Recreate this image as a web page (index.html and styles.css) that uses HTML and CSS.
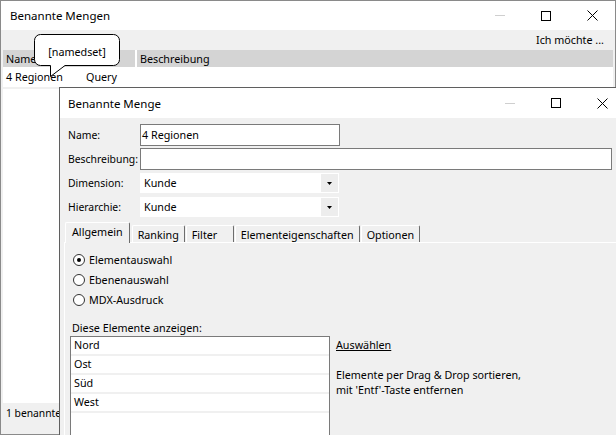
FILE: index.html
```html
<!DOCTYPE html>
<html lang="de">
<head>
<meta charset="utf-8">
<title>Benannte Mengen</title>
<link rel="stylesheet" href="styles.css">
</head>
<body>
<div class="window">
  <div class="titlebar">
    <span class="title">Benannte Mengen</span>
    <div class="controls">
      <span class="ctl"><svg width="10" height="1" viewBox="0 0 10 1"><rect width="10" height="1" fill="#cfcfcf"/></svg></span>
      <span class="ctl"><svg width="10" height="10" viewBox="0 0 10 10"><rect x="0.5" y="0.5" width="9" height="9" fill="none" stroke="#000"/></svg></span>
      <span class="ctl"><svg width="11" height="11" viewBox="0 0 11 11"><path d="M0.5 0.5L10.5 10.5M10.5 0.5L0.5 10.5" stroke="#000" stroke-width="1"/></svg></span>
    </div>
  </div>
  <div class="toolbar"><span>Ich möchte ...</span></div>
  <div class="grid">
    <div class="grid-head">
      <div class="hcell hcell-name">Name</div>
      <div class="hcell hcell-desc">Beschreibung</div>
    </div>
    <div class="grid-row">
      <span class="cell-name">4 Regionen</span>
      <span class="cell-desc">Query</span>
    </div>
  </div>
  <div class="statusbar"><span class="status-text">1 benannte</span></div>
</div>

<div class="tooltip">
  <svg class="tooltip-shape" width="87" height="44" viewBox="0 0 87 44">
    <path d="M6.5 0.5H79.5A6 6 0 0 1 85.5 6.5V25.5A6 6 0 0 1 79.5 31.5H31L16.5 42.5V31.5H6.5A6 6 0 0 1 0.5 25.5V6.5A6 6 0 0 1 6.5 0.5Z" fill="#fff" stroke="#000" stroke-width="1"/>
  </svg>
  <span class="tooltip-text">[namedset]</span>
</div>

<div class="dialog">
  <div class="dlg-titlebar">
    <span class="dlg-title">Benannte Menge</span>
    <div class="controls">
      <span class="ctl"><svg width="10" height="1" viewBox="0 0 10 1"><rect width="10" height="1" fill="#cfcfcf"/></svg></span>
      <span class="ctl"><svg width="10" height="10" viewBox="0 0 10 10"><rect x="0.5" y="0.5" width="9" height="9" fill="none" stroke="#000"/></svg></span>
      <span class="ctl"><svg width="11" height="11" viewBox="0 0 11 11"><path d="M0.5 0.5L10.5 10.5M10.5 0.5L0.5 10.5" stroke="#000" stroke-width="1"/></svg></span>
    </div>
  </div>
  <div class="dlg-body">
    <div class="field">
      <span class="field-label">Name:</span>
      <div class="input input-short">4 Regionen</div>
    </div>
    <div class="field field-gap2">
      <span class="field-label">Beschreibung:</span>
      <div class="input input-long"></div>
    </div>
    <div class="field field-gap3">
      <span class="field-label">Dimension:</span>
      <div class="combo"><span class="combo-text">Kunde</span><span class="combo-btn"><svg width="5" height="3" viewBox="0 0 5 3"><path d="M0 0H5L2.5 3Z" fill="#000"/></svg></span></div>
    </div>
    <div class="field field-gap4">
      <span class="field-label">Hierarchie:</span>
      <div class="combo"><span class="combo-text">Kunde</span><span class="combo-btn"><svg width="5" height="3" viewBox="0 0 5 3"><path d="M0 0H5L2.5 3Z" fill="#000"/></svg></span></div>
    </div>

    <div class="tabs">
      <span class="tab tab-active">Allgemein</span>
      <span class="tab">Ranking</span>
      <span class="tab tab-filter">Filter</span>
      <span class="tab">Elementeigenschaften</span>
      <span class="tab">Optionen</span>
    </div>
    <div class="tab-panel">
      <div class="radio-row"><span class="radio radio-checked"></span><span>Elementauswahl</span></div>
      <div class="radio-row"><span class="radio"></span><span>Ebenenauswahl</span></div>
      <div class="radio-row"><span class="radio"></span><span>MDX-Ausdruck</span></div>
      <div class="list-label">Diese Elemente anzeigen:</div>
      <div class="list-area">
        <div class="listbox">
          <div class="list-item">Nord</div>
          <div class="list-item">Ost</div>
          <div class="list-item">Süd</div>
          <div class="list-item">West</div>
        </div>
        <div class="list-side">
          <div class="link">Auswählen</div>
          <div class="hint">Elemente per Drag &amp; Drop sortieren,<br>mit 'Entf'-Taste entfernen</div>
        </div>
      </div>
    </div>
  </div>
</div>
</body>
</html>
```

FILE: styles.css
```css
* { box-sizing: border-box; }
html, body { margin: 0; padding: 0; }
body {
  width: 616px;
  height: 435px;
  overflow: hidden;
  position: relative;
  font-family: "Noto Sans", "Liberation Sans", sans-serif;
  font-size: 10.75px;
  color: #000;
  background: #fff;
}

/* main window */
.window {
  width: 616px;
  height: 435px;
  border: 1px solid #8a8a8a;
  background: #f0f0f0;
  display: flex;
  flex-direction: column;
}
.titlebar {
  flex: none;
  height: 29px;
  background: #fff;
  display: flex;
  align-items: center;
}
.title {
  flex: 1;
  padding-left: 9px;
  font-size: 11.5px;
}
.controls {
  display: flex;
  height: 100%;
}
.ctl {
  width: 46px;
  height: 100%;
  display: flex;
  align-items: center;
  justify-content: center;
}
.toolbar {
  flex: none;
  height: 20px;
  display: flex;
  align-items: center;
  justify-content: flex-end;
  padding-right: 11px;
}
.grid {
  flex: 1;
  margin: 0 2px;
  background: #fff;
}
.grid-head {
  display: flex;
  gap: 2px;
  height: 17px;
}
.hcell {
  background: #d4d4d4;
  display: flex;
  align-items: center;
  padding-left: 3px;
}
.hcell-name { width: 132px; }
.hcell-desc { flex: 1; }
.grid-row {
  height: 22px;
  display: flex;
  align-items: center;
  border-bottom: 2px solid #f0f0f0;
}
.cell-name {
  width: 83px;
  padding-left: 3px;
}
.statusbar {
  flex: none;
  height: 31px;
  padding: 3px 0 0 5px;
  line-height: 14px;
}
.status-text {
  white-space: nowrap;
  font-size: 10.3px;
}

/* tooltip balloon */
.tooltip {
  position: absolute;
  left: 34px;
  top: 34px;
  width: 87px;
  height: 44px;
}
.tooltip-shape {
  position: absolute;
  left: 0;
  top: 0;
}
.tooltip-text {
  position: relative;
  display: block;
  width: 86px;
  text-align: center;
  line-height: 14px;
  padding-top: 11px;
}

/* dialog */
.dialog {
  position: absolute;
  left: 59px;
  top: 87px;
  width: 566px;
  height: 360px;
  border-left: 1px solid #5f5f5f;
  border-top: 1px solid #5f5f5f;
  background: #f0f0f0;
  display: flex;
  flex-direction: column;
}
.dlg-titlebar {
  flex: none;
  height: 30px;
  background: #fff;
  display: flex;
  align-items: center;
}
.dlg-title {
  flex: 1;
  padding-left: 8px;
  font-size: 11.5px;
}
.dlg-body {
  padding: 6px 0 0 8px;
}
.field {
  display: flex;
  align-items: center;
}
.field-gap2 { margin-top: 2px; }
.field-gap3 { margin-top: 3px; }
.field-gap4 { margin-top: 4px; }
.field-label {
  width: 72px;
  font-size: 10.4px;
}
.input {
  height: 22px;
  border: 1px solid #7a7a7a;
  background: #fff;
  padding-left: 1px;
  display: flex;
  align-items: center;
}
.input-short { width: 200px; }
.input-long { width: 472px; }
.combo {
  width: 199px;
  height: 20px;
  background: #fff;
  display: flex;
  align-items: stretch;
}
.combo-text {
  flex: 1;
  padding-left: 4px;
  display: flex;
  align-items: center;
}
.combo-btn {
  width: 17px;
  margin: 1px;
  background: #ededed;
  display: flex;
  align-items: center;
  justify-content: center;
}

/* tabs */
.tabs {
  display: flex;
  align-items: flex-end;
  gap: 1px;
  margin: 5px 0 0 -3px;
  height: 20px;
}
.tab {
  height: 17px;
  padding: 1px 5px 0 5px;
  border-left: 1px solid #fff;
  border-top: 1px solid #fff;
  border-right: 1px solid #6d6d6d;
  border-radius: 2px 2px 0 0;
  display: flex;
  align-items: center;
}
.tab-active {
  height: 21px;
  margin-bottom: -1px;
  padding: 0 6px 3px 6px;
  margin-right: 1px;
  background: #f0f0f0;
  position: relative;
}
.tab-filter { min-width: 48px; }
.tab-panel {
  margin-left: -4px;
  border-top: 1px solid #fff;
  border-left: 1px solid #fff;
  padding: 7px 0 0 8px;
}
.radio-row {
  height: 20px;
  display: flex;
  align-items: center;
  gap: 4px;
}
.radio {
  width: 12px;
  height: 12px;
  border: 1px solid #333;
  border-radius: 50%;
  background: #fff;
  display: flex;
  align-items: center;
  justify-content: center;
}
.radio-checked::after {
  content: "";
  width: 4px;
  height: 4px;
  border-radius: 50%;
  background: #000;
}
.list-label {
  margin: 10px 0 0 -1px;
  height: 16px;
  line-height: 16px;
}
.list-area {
  display: flex;
  gap: 6px;
  margin-left: -3px;
}
.listbox {
  width: 260px;
  height: 120px;
  border: 1px solid #7a7a7a;
  background: #fff;
}
.list-item {
  height: 19px;
  line-height: 17px;
  padding-left: 3px;
  border-bottom: 2px solid #f0f0f0;
}
.list-side {
  padding-top: 1px;
}
.link {
  line-height: 17px;
  text-decoration: underline;
}
.hint {
  margin-top: 14px;
  line-height: 15px;
}
```
